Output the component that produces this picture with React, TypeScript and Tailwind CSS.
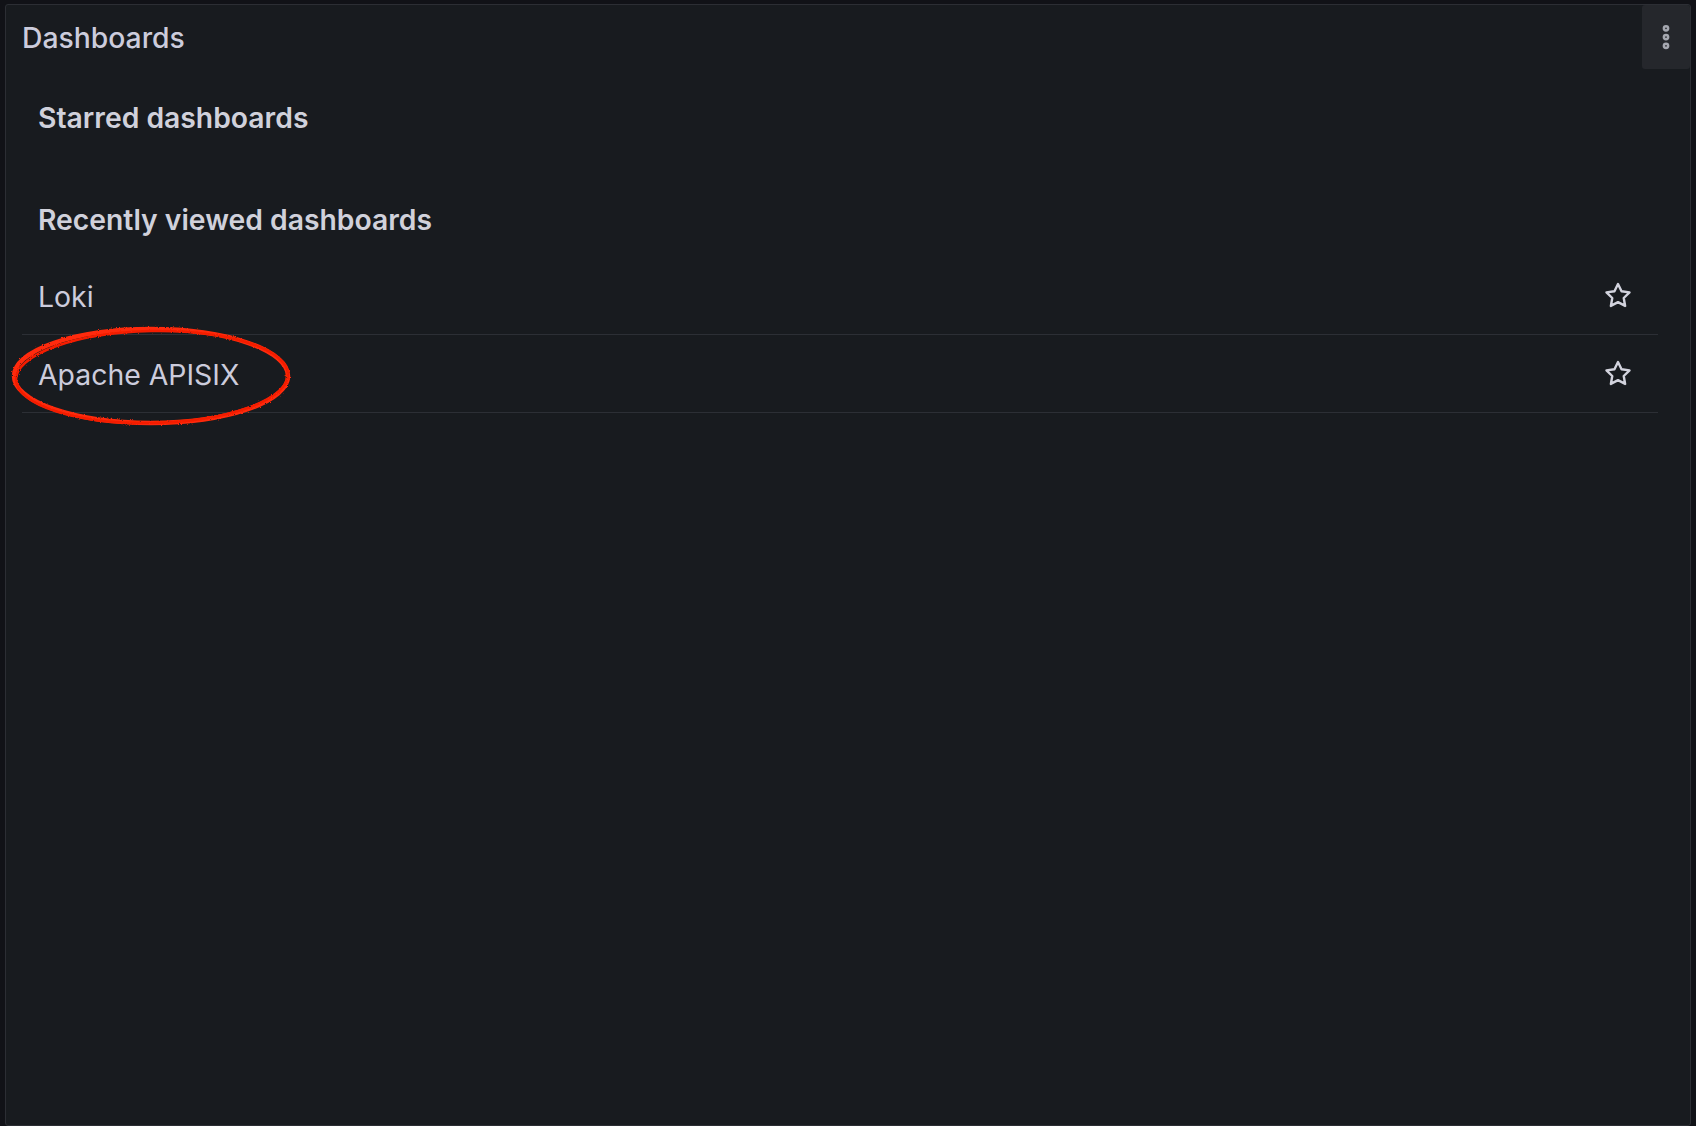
import { MoreVertical } from "lucide-react";

const recent = ["Loki", "Apache APISIX"];

function StarIcon() {
  return (
    <svg width="32" height="32" viewBox="0 0 24 24" fill="none">
      <path
        d="M12 3l2.65 5.45 6 .85-4.35 4.2 1.05 5.95L12 16.6l-5.35 2.85 1.05-5.95L3.35 9.3l6-.85z"
        stroke="#d2d3dd"
        strokeWidth="1.8"
        strokeLinejoin="round"
      />
    </svg>
  );
}

export default function App() {
  return (
    <div
      className="relative h-screen overflow-hidden bg-[#111217] pt-[4px] pl-[5px] pr-[5px]"
      style={{ fontFamily: "Inter, 'Noto Sans', sans-serif" }}
    >
      <div className="flex h-[1122px] flex-col rounded-[3px] border border-[#2c2e34] bg-[#181b1f]">
        {/* Header */}
        <div className="flex h-[64px] shrink-0 items-center justify-between pl-4">
          <h1 className="pt-[2px] text-[28.3px] leading-[40px] font-medium text-[#ccccdc]">
            Dashboards
          </h1>
          <button className="flex h-[64px] w-[48px] items-center justify-center rounded-[3px] bg-[#25272c] text-[#a5a7b0]">
            <MoreVertical size={30} strokeWidth={3.4} />
          </button>
        </div>

        {/* Content */}
        <div className="flex flex-col pl-4 pr-8 pt-[29px]">
          <h2 className="px-4 text-[28.3px] leading-[40px] font-semibold text-[#d0d1db]">
            Starred dashboards
          </h2>
          <div className="h-[62px]" />
          <h2 className="px-4 text-[28.3px] leading-[40px] font-semibold text-[#d0d1db]">
            Recently viewed dashboards
          </h2>
          <ul className="mt-[17px]">
            {recent.map((name) => (
              <li
                key={name}
                className="flex h-[78px] items-center justify-between border-b border-[#2c2f35] pl-4 pr-[24px]"
              >
                <span className="pt-[2px] text-[28.4px] leading-[40px] text-[#ccccdc]">
                  {name}
                </span>
                <StarIcon />
              </li>
            ))}
          </ul>
        </div>
      </div>

      {/* Red annotation circle */}
      <svg
        className="pointer-events-none absolute left-[6px] top-[322px]"
        width="292"
        height="110"
        viewBox="0 0 292 110"
        fill="none"
      >
        <defs>
          <filter id="rough" x="-5%" y="-10%" width="110%" height="120%">
            <feTurbulence type="fractalNoise" baseFrequency="0.9" numOctaves="2" seed="3" />
            <feDisplacementMap in="SourceGraphic" scale="2.5" />
          </filter>
        </defs>
        <g filter="url(#rough)">
          <ellipse cx="145" cy="54" rx="137" ry="47" stroke="#ff2a0a" strokeWidth="4.5" />
          <ellipse
            cx="146"
            cy="55"
            rx="136"
            ry="46"
            stroke="#f41f00"
            strokeWidth="2.5"
            transform="rotate(-1.2 146 55)"
          />
        </g>
      </svg>
    </div>
  );
}
